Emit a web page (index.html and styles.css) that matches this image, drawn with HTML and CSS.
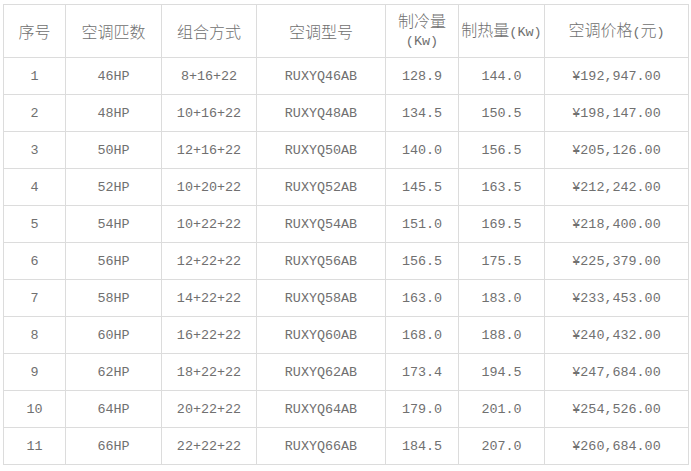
FILE: index.html
```html
<!DOCTYPE html>
<html lang="zh-CN">
<head>
<meta charset="utf-8">
<title>空调价格表</title>
<link rel="stylesheet" href="styles.css">
</head>
<body>
<table class="price-table">
  <colgroup>
    <col class="c1"><col class="c2"><col class="c3"><col class="c4"><col class="c5"><col class="c6"><col class="c7">
  </colgroup>
  <thead>
    <tr class="head-row">
      <th>序号</th>
      <th>空调匹数</th>
      <th>组合方式</th>
      <th>空调型号</th>
      <th class="two-line">制冷量<br><span class="unit">(Kw)</span></th>
      <th>制热量<span class="unit">(Kw)</span></th>
      <th>空调价格<span class="unit">(</span>元<span class="unit">)</span></th>
    </tr>
  </thead>
  <tbody>
    <tr><td>1</td><td>46HP</td><td>8+16+22</td><td>RUXYQ46AB</td><td>128.9</td><td>144.0</td><td>¥192,947.00</td></tr>
    <tr><td>2</td><td>48HP</td><td>10+16+22</td><td>RUXYQ48AB</td><td>134.5</td><td>150.5</td><td>¥198,147.00</td></tr>
    <tr><td>3</td><td>50HP</td><td>12+16+22</td><td>RUXYQ50AB</td><td>140.0</td><td>156.5</td><td>¥205,126.00</td></tr>
    <tr><td>4</td><td>52HP</td><td>10+20+22</td><td>RUXYQ52AB</td><td>145.5</td><td>163.5</td><td>¥212,242.00</td></tr>
    <tr><td>5</td><td>54HP</td><td>10+22+22</td><td>RUXYQ54AB</td><td>151.0</td><td>169.5</td><td>¥218,400.00</td></tr>
    <tr><td>6</td><td>56HP</td><td>12+22+22</td><td>RUXYQ56AB</td><td>156.5</td><td>175.5</td><td>¥225,379.00</td></tr>
    <tr><td>7</td><td>58HP</td><td>14+22+22</td><td>RUXYQ58AB</td><td>163.0</td><td>183.0</td><td>¥233,453.00</td></tr>
    <tr><td>8</td><td>60HP</td><td>16+22+22</td><td>RUXYQ60AB</td><td>168.0</td><td>188.0</td><td>¥240,432.00</td></tr>
    <tr><td>9</td><td>62HP</td><td>18+22+22</td><td>RUXYQ62AB</td><td>173.4</td><td>194.5</td><td>¥247,684.00</td></tr>
    <tr><td>10</td><td>64HP</td><td>20+22+22</td><td>RUXYQ64AB</td><td>179.0</td><td>201.0</td><td>¥254,526.00</td></tr>
    <tr><td>11</td><td>66HP</td><td>22+22+22</td><td>RUXYQ66AB</td><td>184.5</td><td>207.0</td><td>¥260,684.00</td></tr>
  </tbody>
</table>
</body>
</html>
```
FILE: styles.css
```css
html, body {
  margin: 0;
  padding: 0;
  background: #fff;
}
body {
  padding: 4px 0 0 3px;
}
.price-table {
  border-collapse: collapse;
  table-layout: fixed;
  width: 685px;
  color: #707070;
}
.c1 { width: 62px; }
.c2 { width: 96px; }
.c3 { width: 95px; }
.c4 { width: 129px; }
.c5 { width: 73px; }
.c6 { width: 86px; }
.c7 { width: 144px; }
.price-table th,
.price-table td {
  border: 1px solid #dcdcdc;
  padding: 0;
  text-align: center;
  vertical-align: middle;
  white-space: nowrap;
}
.price-table th {
  font-family: "Noto Sans CJK SC", sans-serif;
  font-weight: 300;
  font-size: 16px;
  line-height: 18px;
}
.head-row { height: 53px; }
.two-line { line-height: 16px; padding-bottom: 4px; }
.unit {
  font-family: "Liberation Mono", monospace;
  font-size: 13.5px;
}
.price-table td {
  font-family: "Liberation Mono", "Noto Sans CJK SC", monospace;
  font-size: 13.4px;
  height: 36px;
}
```
